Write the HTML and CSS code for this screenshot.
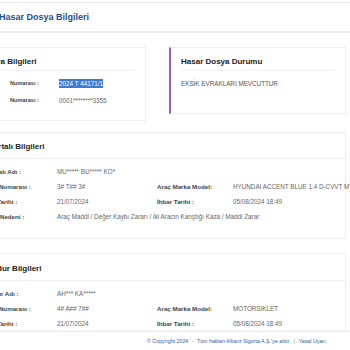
FILE: index.html
```html
<!DOCTYPE html>
<html>
<head>
	<title>Hasar Dosya Bilgileri</title>
	<meta name="viewport" content="width=device-width,initial-scale=1.0" />
	<link rel="stylesheet" href="styles.css">
</head>
<body>
	<div class="header">
		<div class="header-title">Hasar Dosya Bilgileri</div>
	</div>
	<div class="page">
		<div class="cards">
			<div class="card">
				<div class="card-title">Dosya Bilgileri</div>
				<div class="card-rows">
					<div class="label">Numarası :</div>
					<div class="value"><span class="selected">2024 T 44171/1</span></div>
					<div class="label">Numarası :</div>
					<div class="value">0001********3355</div>
				</div>
			</div>
			<div class="card status">
				<div class="card-title">Hasar Dosya Durumu</div>
				<div class="status-text">EKSİK EVRAKLARI MEVCUTTUR</div>
			</div>
		</div>

		<div class="section">
			<div class="section-title">Sigortalı Bilgileri</div>
			<div class="rows">
				<div class="label">Sigortalı Adı :</div>
				<div class="value wide">MU***** BU***** KO*</div>
				<div class="label">Plaka Numarası :</div>
				<div class="value">3# T## 3#</div>
				<div class="label">Araç Marka Model:</div>
				<div class="value">HYUNDAI ACCENT BLUE 1.4 D-CVVT MT</div>
				<div class="label">Kaza Tarihi :</div>
				<div class="value">21/07/2024</div>
				<div class="label">İhbar Tarihi :</div>
				<div class="value">05/08/2024 18:49</div>
				<div class="label">Hasar Nedeni :</div>
				<div class="value wide">Araç Maddi / Değer Kaybı Zararı / İki Aracın Karıştığı Kaza / Maddi Zarar</div>
			</div>
		</div>

		<div class="section">
			<div class="section-title">Mağdur Bilgileri</div>
			<div class="rows">
				<div class="label">Mağdur Adı :</div>
				<div class="value wide">AH*** KA*****</div>
				<div class="label">Plaka Numarası :</div>
				<div class="value">4# A## 7##</div>
				<div class="label">Araç Marka Model:</div>
				<div class="value">MOTORSIKLET</div>
				<div class="label">Kaza Tarihi :</div>
				<div class="value">21/07/2024</div>
				<div class="label">İhbar Tarihi :</div>
				<div class="value">05/08/2024 18:49</div>
			</div>
		</div>
	</div>
	<div class="footer">
		© Copyright 2024 <span class="sep">-</span> Tüm hakları Allianz Sigorta A.Ş.'ye aittir. <span class="sep">|</span> Yasal Uyarı
	</div>
</body>
</html>
```
FILE: styles.css
```css
body {
	margin: 0;
	padding: 2px 0 0;
	background-color: #ffffff;
	font-family: "Liberation Sans", Arial, sans-serif;
	overflow: hidden;
}
.header {
	border-top: 1px solid #e9e9e9;
	border-bottom: 2px solid #eeeeee;
	height: 28px;
}
.header-title {
	line-height: 28px;
	font-size: 9px;
	font-weight: bold;
	color: #1d4f8e;
	margin-left: -1px;
}
.page {
	margin: 14px 4px 0 -30px;
}
.cards {
	display: flex;
	gap: 23px;
	align-items: flex-start;
}
.card {
	flex: 1;
	border: 1px solid #efefef;
	padding: 0 10px 11px;
}
.card.status {
	border-left: 2px solid #9c5bc6;
	padding-bottom: 21px;
}
.card-title, .section-title {
	font-size: 8px;
	font-weight: bold;
	color: #222222;
	line-height: 12px;
	padding: 8px 0 2px;
	border-bottom: 1px solid #f0f0f0;
}
.card-rows {
	display: grid;
	grid-template-columns: 49px 1fr;
	padding: 4px 0 0 29px;
}
.card-rows .label, .card-rows .value {
	line-height: 17px;
}
.card-rows .label {
	font-size: 5.6px;
}
.status-text {
	margin-top: 4px;
	line-height: 17px;
	font-size: 6.3px;
	color: #555555;
}
.label {
	font-size: 6.2px;
	font-weight: bold;
	color: #444444;
	white-space: nowrap;
}
.value {
	font-size: 6.3px;
	color: #666666;
	white-space: nowrap;
}
.selected {
	background-color: #3f78d3;
	color: #ffffff;
	padding: 1px 0;
}
.section {
	border: 1px solid #efefef;
	padding: 0 10px 14px;
	margin-top: 11px;
}
.section + .section {
	margin-top: 14px;
}
.section-title {
	padding: 8px 0 5px;
	margin: 0 -10px 0 0;
}
.section + .section .section-title {
	padding-top: 9px;
}
.rows {
	display: grid;
	grid-template-columns: 76px 100px 76px 1fr;
	padding-top: 5px;
}
.rows .label, .rows .value {
	line-height: 15px;
}
.rows .wide {
	grid-column: span 3;
}
.footer {
	position: fixed;
	left: 0;
	right: 0;
	bottom: 0;
	height: 18px;
	line-height: 18px;
	border-top: 1px solid #e6e6e6;
	background-color: #ffffff;
	padding-left: 147px;
	font-size: 5.3px;
	color: #2b5ea9;
	white-space: nowrap;
}
.sep {
	color: #888888;
	margin: 0 2px;
}
```
